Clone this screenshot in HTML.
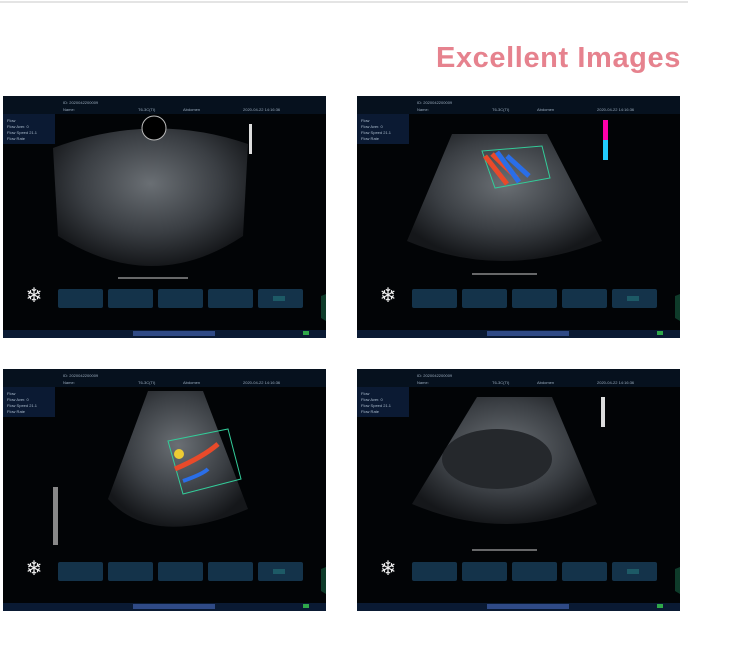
<!DOCTYPE html>
<html><head><style>
body{margin:0;width:752px;height:657px;background:#fff;position:relative;overflow:hidden;font-family:"Liberation Sans",sans-serif}
.line{position:absolute;left:0;top:1px;width:688px;height:2px;background:#e4e4e4}
h1{position:absolute;left:436px;top:42px;margin:0;font-size:29px;font-weight:bold;color:#e6828e;letter-spacing:0.6px}
.p{position:absolute;width:323px;height:242px;background:#020406;overflow:hidden}
.p svg{position:absolute;left:0;top:0}
</style></head><body>
<div class="line"></div>
<h1>Excellent Images</h1>

<svg width="0" height="0" style="position:absolute">
<defs>
<radialGradient id="g1" cx="50%" cy="40%" r="60%"><stop offset="0" stop-color="#6a6f74"/><stop offset=".6" stop-color="#3a3e43"/><stop offset="1" stop-color="#15171a"/></radialGradient>
<g id="ui">
<rect x="0" y="0" width="323" height="18" fill="#06111e"/>
<text x="60" y="8" font-size="4" fill="#9ab">ID: 2020042200009</text>
<text x="60" y="15" font-size="4" fill="#9ab">Name:</text>
<text x="135" y="15" font-size="4" fill="#9ab">T6-3C(TI)</text>
<text x="180" y="15" font-size="4" fill="#9ab">Abdomen</text>
<text x="240" y="15" font-size="4" fill="#9ab">2020-04-22  14:16:36</text>
<rect x="0" y="18" width="52" height="30" fill="#0b1a33"/>
<text x="4" y="26" font-size="4" fill="#abc">Flow</text>
<text x="4" y="32" font-size="4" fill="#abc">Flow Aver. 0</text>
<text x="4" y="38" font-size="4" fill="#abc">Flow Speed 21.1</text>
<text x="4" y="44" font-size="4" fill="#abc">Flow Rate</text>
<rect x="55" y="193" width="45" height="19" rx="2" fill="#14334a"/>
<rect x="105" y="193" width="45" height="19" rx="2" fill="#14334a"/>
<rect x="155" y="193" width="45" height="19" rx="2" fill="#14334a"/>
<rect x="205" y="193" width="45" height="19" rx="2" fill="#14334a"/>
<rect x="255" y="193" width="45" height="19" rx="2" fill="#14334a"/>
<rect x="270" y="200" width="12" height="5" fill="#1d5a66"/>
<text x="31" y="206" font-size="20" fill="#f0f0f0" text-anchor="middle">❄</text>
<rect x="0" y="234" width="323" height="8" fill="#0a1a33"/>
<rect x="130" y="235" width="82" height="5" fill="#2f4a86"/>
<rect x="300" y="235" width="6" height="4" fill="#2fa84a"/>
<path d="M318 200 L323 198 L323 225 L318 222Z" fill="#0e3b2a"/>
</g>
</defs></svg>

<div class="p" style="left:3px;top:96px"><svg width="323" height="242">
<use href="#ui"/>
<path d="M50 52 Q150 15 245 48 L240 140 Q150 200 55 140Z" fill="url(#g1)"/>
<circle cx="151" cy="32" r="12" fill="#000" stroke="#bbb" stroke-width="1"/>
<rect x="246" y="28" width="3" height="30" fill="#ddd"/>
<line x1="115" y1="182" x2="185" y2="182" stroke="#ccc" stroke-width="1"/>
</svg></div>

<div class="p" style="left:357px;top:96px"><svg width="323" height="242">
<use href="#ui"/>
<path d="M95 38 L190 38 L245 145 Q145 185 50 145Z" fill="url(#g1)"/>
<path d="M125 55 L185 50 L193 82 L138 92Z" fill="none" stroke="#3c9" stroke-width="1"/>
<path d="M128 60 L150 88 M135 58 L160 82" stroke="#e84a2a" stroke-width="5"/>
<path d="M140 56 L162 86 M150 60 L172 80" stroke="#2a6ee8" stroke-width="5"/>
<rect x="246" y="24" width="5" height="40" fill="#f0a"/><rect x="246" y="44" width="5" height="20" fill="#2cf"/>
<line x1="115" y1="178" x2="180" y2="178" stroke="#ccc" stroke-width="1"/>
</svg></div>

<div class="p" style="left:3px;top:369px"><svg width="323" height="242">
<use href="#ui"/>
<path d="M145 22 L200 22 L245 140 Q150 180 105 130Z" fill="url(#g1)"/>
<path d="M165 72 L225 60 L238 110 L180 125Z" fill="none" stroke="#3c9" stroke-width="1"/>
<path d="M172 100 Q200 88 215 75" stroke="#e84a2a" stroke-width="5" fill="none"/>
<path d="M180 112 Q200 105 205 100" stroke="#2a6ee8" stroke-width="4" fill="none"/>
<circle cx="176" cy="85" r="5" fill="#ec3"/>
<rect x="50" y="118" width="5" height="58" fill="#888"/>
</svg></div>

<div class="p" style="left:357px;top:369px"><svg width="323" height="242">
<use href="#ui"/>
<path d="M120 28 L195 28 L240 135 Q150 175 55 135Z" fill="url(#g1)"/>
<ellipse cx="140" cy="90" rx="55" ry="30" fill="#25282c"/>
<rect x="244" y="28" width="4" height="30" fill="#ddd"/>
<line x1="115" y1="181" x2="180" y2="181" stroke="#ccc" stroke-width="1"/>
</svg></div>
</body></html>
